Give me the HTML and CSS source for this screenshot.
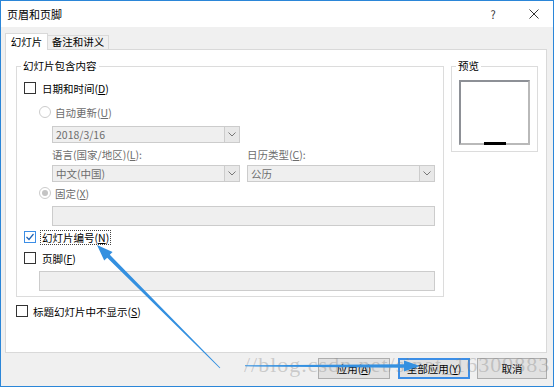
FILE: index.html
```html
<!DOCTYPE html>
<html lang="zh-CN">
<head>
    <meta charset="UTF-8">
    <title>页眉和页脚</title>
    <link rel="stylesheet" href="styles.css">
</head>
<body>
    <div class="window">
        <div class="titlebar">
            <span class="title">页眉和页脚</span>
            <span class="help">?</span>
            <span class="close">
                <svg width="10" height="10" viewBox="0 0 10 10"><path d="M0.5 0.5 L9.5 9.5 M9.5 0.5 L0.5 9.5" stroke="#333" stroke-width="1" fill="none"/></svg>
            </span>
        </div>
        <div class="client">
            <div class="tabs">
                <div class="tab active">幻灯片</div>
                <div class="tab">备注和讲义</div>
            </div>
            <div class="panel">
                <div class="left">
                    <fieldset class="group content-group">
                        <legend>幻灯片包含内容</legend>
                        <div class="row">
                            <span class="check"></span>
                            <span>日期和时间(<u>D</u>)</span>
                        </div>
                        <div class="row radio-row disabled">
                            <span class="radio"></span>
                            <span>自动更新(<u>U</u>)</span>
                        </div>
                        <div class="select wide-indent first-select">
                            <span class="select-text">2018/3/16</span>
                            <span class="drop-btn"><svg width="8" height="5" viewBox="0 0 8 5"><path d="M0.5 0.5 L4 4 L7.5 0.5" stroke="#777" fill="none"/></svg></span>
                        </div>
                        <div class="labels wide-indent disabled">
                            <span class="label">语言(国家/地区)(<u>L</u>):</span>
                            <span class="label">日历类型(<u>C</u>):</span>
                        </div>
                        <div class="selects wide-indent">
                            <div class="select">
                                <span class="select-text">中文(中国)</span>
                                <span class="drop-btn"><svg width="8" height="5" viewBox="0 0 8 5"><path d="M0.5 0.5 L4 4 L7.5 0.5" stroke="#777" fill="none"/></svg></span>
                            </div>
                            <div class="select">
                                <span class="select-text">公历</span>
                                <span class="drop-btn"><svg width="8" height="5" viewBox="0 0 8 5"><path d="M0.5 0.5 L4 4 L7.5 0.5" stroke="#777" fill="none"/></svg></span>
                            </div>
                        </div>
                        <div class="row radio-row disabled fixed-row">
                            <span class="radio selected"></span>
                            <span>固定(<u>X</u>)</span>
                        </div>
                        <div class="field wide-indent date-field"></div>
                        <div class="row number-row">
                            <span class="check checked">
                                <svg width="10" height="10" viewBox="0 0 10 10"><path d="M1.5 5 L4 7.5 L8.5 2" stroke="#1f63b5" stroke-width="1.2" fill="none"/></svg>
                            </span>
                            <span class="focus">幻灯片编号(<u>N</u>)</span>
                        </div>
                        <div class="row">
                            <span class="check"></span>
                            <span>页脚(<u>F</u>)</span>
                        </div>
                        <div class="field footer-field"></div>
                    </fieldset>
                    <div class="row title-row">
                        <span class="check"></span>
                        <span>标题幻灯片中不显示(<u>S</u>)</span>
                    </div>
                </div>
                <fieldset class="group preview-group">
                    <legend>预览</legend>
                    <div class="preview-box">
                        <div class="preview-bar"></div>
                    </div>
                </fieldset>
            </div>
            <div class="buttons">
                <div class="btn">应用(<u>A</u>)</div>
                <div class="btn primary">全部应用(<u>Y</u>)</div>
                <div class="btn cancel">取消</div>
            </div>
        </div>

        <div class="watermark">//blog.csdn.net/sinat_16309883</div>

        <svg class="annot" width="554" height="387" viewBox="0 0 554 387">
            <!-- arrow to the slide number checkbox -->
            <polygon fill="#3490e0" points="220.3,367.7 219.7,368.3 107.2,257.8 104.2,260.5 97,245 112.6,252 109.8,254.8"/>
            <!-- arrow to the apply-all button -->
            <polygon fill="#3490e0" points="245,365.3 404,364.3 404,360.5 420,366 404,371.5 404,367.7 245,366.3"/>
        </svg>
    </div>
</body>
</html>
```

FILE: styles.css
```css
body {
    margin: 0;
    font-family: "Noto Sans CJK SC", "Noto Sans", sans-serif;
    font-size: 10.5px;
    color: #000;
}
u {
    text-decoration: underline;
    text-underline-offset: 1px;
}
.window {
    position: relative;
    width: 554px;
    height: 387px;
    box-sizing: border-box;
    border: 1px solid #2b86d8;
    background-color: #f0f0f0;
    display: flex;
    flex-direction: column;
    overflow: hidden;
}
.titlebar {
    height: 26px;
    flex-shrink: 0;
    background-color: #fff;
    display: flex;
    align-items: center;
    padding-left: 6px;
}
.title {
    flex: 1;
    font-size: 11px;
}
.help {
    width: 12px;
    text-align: center;
    font-size: 11px;
    color: #333;
    margin-right: 30px;
}
.close {
    width: 10px;
    height: 10px;
    display: flex;
    margin-right: 14px;
}
.client {
    flex: 1;
    padding: 6px 6px 0 4px;
}
.tabs {
    display: flex;
    align-items: flex-end;
    height: 16px;
}
.tab {
    box-sizing: border-box;
    width: 62px;
    height: 14px;
    line-height: 12px;
    text-align: center;
    border: 1px solid #d9d9d9;
    border-bottom: none;
    background-color: #f0f0f0;
    margin-left: -1px;
}
.tab.active {
    position: relative;
    z-index: 1;
    width: 43px;
    height: 17px;
    line-height: 16px;
    margin-left: 0;
    margin-bottom: -1px;
    background-color: #fff;
}
.panel {
    position: relative;
    box-sizing: border-box;
    height: 304px;
    background-color: #fff;
    border: 1px solid #d9d9d9;
    padding: 8px 0 0 10px;
    display: flex;
    align-items: flex-start;
    gap: 7px;
}
.group {
    margin: 0;
    min-width: 0;
    border: 1px solid #dcdcdc;
}
.group legend {
    padding: 0 2px;
    margin-left: -3px;
    line-height: 16px;
}
.content-group {
    box-sizing: border-box;
    width: 428px;
    padding: 4px 7px 5px 7px;
}
.row {
    display: flex;
    align-items: center;
    height: 20px;
}
.check {
    box-sizing: border-box;
    width: 12px;
    height: 12px;
    border: 1px solid #333;
    background-color: #fff;
    margin-right: 6px;
    display: flex;
    align-items: center;
    justify-content: center;
}
.check.checked {
    border-color: #3c8ee6;
}
.radio-row {
    margin-top: 4px;
    padding-left: 15px;
}
.radio {
    box-sizing: border-box;
    width: 12px;
    height: 12px;
    border: 1px solid #cccccc;
    border-radius: 50%;
    background-color: #fff;
    margin-right: 4px;
    display: flex;
    align-items: center;
    justify-content: center;
}
.radio.selected::after {
    content: "";
    width: 6px;
    height: 6px;
    border-radius: 50%;
    background-color: #c4c4c4;
}
.disabled {
    color: #6d6d6d;
}
.wide-indent {
    margin-left: 28px;
}
.select {
    box-sizing: border-box;
    width: 188px;
    height: 17px;
    border: 1px solid #cccccc;
    background-color: #efefef;
    display: flex;
    align-items: center;
    color: #6d6d6d;
}
.first-select {
    margin-top: 4px;
}
.select-text {
    flex: 1;
    padding-left: 3px;
    line-height: 15px;
}
.drop-btn {
    box-sizing: border-box;
    width: 15px;
    height: 15px;
    border-left: 1px solid #cccccc;
    background-color: #e8e8e8;
    display: flex;
    align-items: center;
    justify-content: center;
}
.labels {
    display: flex;
    gap: 7px;
    height: 16px;
    line-height: 16px;
    margin-top: 4px;
}
.label {
    width: 188px;
}
.selects {
    display: flex;
    gap: 7px;
    margin-top: 2px;
}
.fixed-row {
    margin-top: 1px;
}
.field {
    box-sizing: border-box;
    height: 20px;
    border: 1px solid #cccccc;
    background-color: #efefef;
    margin-top: 3px;
}
.date-field {
    width: 383px;
}
.number-row {
    margin-top: 1px;
}
.number-row .check {
    margin-right: 4px;
}
.focus {
    border: 1px dotted #444;
    padding: 0 1px;
    line-height: 13px;
}
.number-row + .row {
    margin-top: 1px;
}
.footer-field {
    width: 396px;
    margin-left: 15px;
}
.title-row {
    margin-top: 4px;
}
.title-row .check {
    margin-right: 5px;
}
.preview-group {
    box-sizing: border-box;
    width: 87px;
    padding: 6px 7px 6px 7px;
}
.preview-box {
    box-sizing: border-box;
    width: 71px;
    height: 65px;
    border: 2px solid;
    border-color: #8d9096 #b9b9b9 #b9b9b9 #8d9096;
    display: flex;
    justify-content: center;
    align-items: flex-end;
}
.preview-bar {
    width: 22px;
    height: 3px;
    background-color: #000;
    margin-bottom: -2px;
}
.buttons {
    display: flex;
    justify-content: flex-end;
    margin-top: 5px;
}
.btn {
    box-sizing: border-box;
    width: 72px;
    height: 21px;
    line-height: 19px;
    text-align: center;
    border: 1px solid #adadad;
    background-color: #e1e1e1;
    margin-left: 8px;
}
.btn.primary {
    border: 2px solid #3c8ee6;
    line-height: 17px;
}
.btn.cancel {
    width: 70px;
    margin-left: 7px;
}
.watermark {
    position: absolute;
    left: 243px;
    top: 353px;
    font-family: "Liberation Serif", serif;
    font-size: 22px;
    line-height: 22px;
    letter-spacing: 1px;
    color: rgba(130, 130, 130, 0.35);
    white-space: nowrap;
    pointer-events: none;
}
.annot {
    position: absolute;
    left: -1px;
    top: -1px;
    pointer-events: none;
}
```
